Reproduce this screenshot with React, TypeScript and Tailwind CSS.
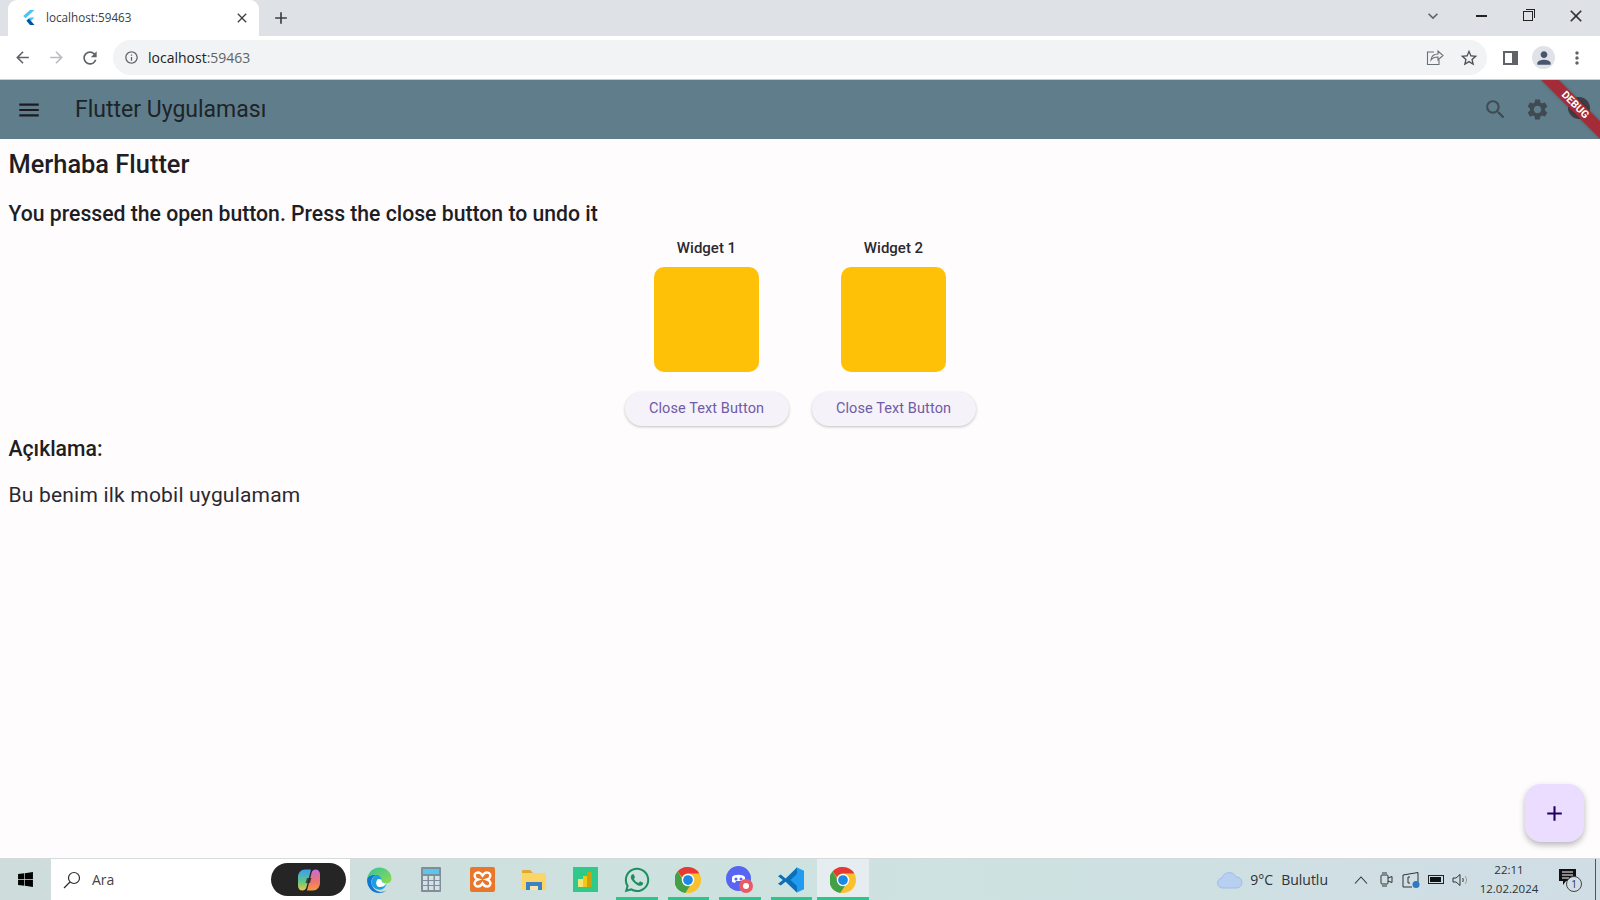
import React from "react";
import { MdMenu, MdSearch, MdSettings, MdAdd, MdArrowBack, MdArrowForward, MdRefresh, MdClose, MdInfoOutline, MdPerson, MdStarBorder, MdMoreVert, MdKeyboardArrowDown } from "react-icons/md";
import { FaWindows, FaWhatsapp } from "react-icons/fa";

const Flutter = () => (
  <svg width="13" height="16" viewBox="0 0 13 16">
    <path d="M8 0h4.500L3.500 8.200 1.200 6z" fill="#47c5fb" />
    <path d="M8 7.400h4.500L6.800 13l-2.300-2.200z" fill="#47c5fb" />
    <path d="M4.500 10.800l2.300-2.200L12.500 15H8z" fill="#00569e" />
  </svg>
);

const Chrome = () => (
  <svg width="26" height="26" viewBox="0 0 48 48">
    <circle cx="24" cy="24" r="24" fill="#fbc02d" />
    <path d="M24 0a24 24 0 0 1 20.800 12H24a12 12 0 0 0-11 7L5 8A24 24 0 0 1 24 0z" fill="#e53935" />
    <path d="M5 8l10 17a10 10 0 0 0 13 9L19 48A24 24 0 0 1 5 8z" fill="#43a047" />
    <circle cx="24" cy="24" r="11.500" fill="#fff" />
    <circle cx="24" cy="24" r="9" fill="#1e88e5" />
  </svg>
);

const Edge = () => (
  <svg width="26" height="26" viewBox="0 0 48 48">
    <defs>
      <linearGradient id="edgeA" x1="0" y1="0" x2="1" y2="1">
        <stop offset="0" stopColor="#35c1a0" />
        <stop offset="1" stopColor="#8fdc4a" />
      </linearGradient>
    </defs>
    <path d="M2 22C4 9 14 1 25 1c13 0 22 10 22 20 0 7-6 10-12 9-5-1-6-3-6-5 0-5-4-9-10-9C10 16 4 18 2 22z" fill="url(#edgeA)" />
    <path d="M2 22c2-5 9-8 16-7-6 3-9 8-8 15 1 8 8 15 17 16 4 0 8-1 11-3-4 4-9 5-14 5C11 48 1 36 2 22z" fill="#0f78d4" />
    <path d="M18 15c6-1 11 4 11 10 0 4 4 6 9 5-2 9-8 12-13 12-9 0-15-8-15-13 0-6 3-11 8-14z" fill="#1c9ee0" />
    <path d="M21 23c4-2 8 0 8 3 0 3 5 5 9 4-3 5-7 7-12 7-6 0-10-7-5-14z" fill="#fff" />
  </svg>
);

const Calc = () => (
  <svg width="20" height="25" viewBox="0 0 20 25">
    <rect width="20" height="25" rx="1" fill="#7d8f9a" />
    <rect x="2" y="2" width="16" height="5" fill="#5cc6ea" />
    {[9, 14, 19].map((y) =>
      [2, 8, 14].map((x) => <rect key={`${x}-${y}`} x={x} y={y} width="4.500" height="4" fill="#d9e0e3" />)
    )}
  </svg>
);

const Xampp = () => (
  <svg width="25" height="25" viewBox="0 0 25 25">
    <rect width="25" height="25" rx="2" fill="#e8762b" />
    <path d="M8 5.500c2.500 0 3.500 1.500 4.500 3 1-1.500 2-3 4.500-3 3 0 4.500 3 2.500 5.500-.7.700-1.500 1.200-2.500 1.500 1 .3 1.800.8 2.500 1.500 2 2.500.5 5.500-2.500 5.500-2.500 0-3.500-1.500-4.500-3-1 1.500-2 3-4.500 3-3 0-4.500-3-2.500-5.500.7-.7 1.500-1.200 2.500-1.500-1-.3-1.800-.8-2.500-1.500C3.500 8.500 5 5.500 8 5.500z" fill="none" stroke="#fff" strokeWidth="2.400" />
  </svg>
);

const Folder = () => (
  <svg width="24" height="22" viewBox="0 0 24 22">
    <path d="M0 2a1 1 0 0 1 1-1h7l3 3H0z" fill="#e0a82e" />
    <rect y="4" width="24" height="17" rx="1" fill="#fbd566" />
    <path d="M4 13h16v8h-4v-4H8v4H4z" fill="#3b82c4" />
    <rect x="8" y="17" width="8" height="4" fill="#f5e5a8" />
  </svg>
);

const PowerBi = () => (
  <svg width="25" height="25" viewBox="0 0 25 25">
    <rect width="25" height="25" fill="#2fc98a" />
    <rect x="5" y="12" width="5" height="8" fill="#f6e27a" />
    <rect x="10" y="9" width="5" height="11" fill="#f2c811" />
    <rect x="14" y="5" width="5" height="15" fill="#c9a20c" />
  </svg>
);

const Discord = () => (
  <svg width="28" height="28" viewBox="0 0 28 28">
    <circle cx="12.500" cy="12.500" r="12.500" fill="#5865f2" />
    <path d="M6 11c2-3 11-3 13 0v5l-3 1-1-2h-5l-1 2-3-1z" fill="#fff" />
    <circle cx="10" cy="13" r="1.500" fill="#5865f2" />
    <circle cx="15" cy="13" r="1.500" fill="#5865f2" />
    <circle cx="20" cy="20" r="7" fill="#ea5a64" />
    <circle cx="20" cy="20" r="3" fill="#fff" />
  </svg>
);

const VsCode = () => (
  <svg width="26" height="26" viewBox="0 0 24 24">
    <path d="M17.500 0.500L24 3.500v17l-6.500 3L9 15l8.500-15z" fill="#1f9cf0" />
    <path d="M17.500 0.500L7 10.500 2.500 7 0 8.500l4.500 3.500L0 15.500 2.500 17 7 13.500l10.500 10V17.500L11.500 12l6-5.500z" fill="#0c6fb8" />
  </svg>
);

const Copilot = () => (
  <svg width="24" height="24" viewBox="0 0 24 24">
    <defs>
      <linearGradient id="copA" x1="0" y1="0" x2="0" y2="1">
        <stop offset="0" stopColor="#3b9cf5" />
        <stop offset="0.6" stopColor="#62c97f" />
        <stop offset="1" stopColor="#f5c542" />
      </linearGradient>
      <linearGradient id="copB" x1="0" y1="0" x2="0" y2="1">
        <stop offset="0" stopColor="#c86dd7" />
        <stop offset="0.6" stopColor="#f0746a" />
        <stop offset="1" stopColor="#f59a42" />
      </linearGradient>
    </defs>
    <path d="M8 1.500h6L9.500 19c-.5 2-2 3.500-4 3.500-3 0-4.500-2-4.500-5V9c0-4 3-7.500 7-7.500z" fill="url(#copA)" />
    <path d="M16 22.500h-6L14.500 5c.5-2 2-3.500 4-3.500 3 0 4.500 2 4.500 5V15c0 4-3 7.500-7 7.500z" fill="url(#copB)" />
    <path d="M10 10h4.500l-1.500 5h-4.500z" fill="#252525" opacity="0.75" />
  </svg>
);

const Cloud = () => (
  <svg width="26" height="18" viewBox="0 0 26 18">
    <path d="M6 17a5 5 0 0 1-1-10 7.500 7.500 0 0 1 14-1 5.500 5.500 0 0 1 1 11z" fill="#b7d0f2" stroke="#9fbde8" />
  </svg>
);

const Underline = ({ wide }: { wide?: boolean }) => (
  <span className={`absolute bottom-0 h-[3px] bg-[#2ec48b] ${wide ? "left-0 right-0" : "left-[5px] right-[5px]"}`} />
);

const TaskIcon = ({ children, on, active }: { children: React.ReactNode; on?: boolean; active?: boolean }) => (
  <div className={`relative flex h-full w-[51.5px] items-center justify-center ${active ? "bg-[#e6edf0]" : ""}`}>
    {children}
    {on && <Underline wide={active} />}
  </div>
);

const Widget = ({ label }: { label: string }) => (
  <div className="flex w-[164px] flex-col items-center">
    <div className="text-[15px] leading-[20px] font-medium text-[#2b292f]">{label}</div>
    <div className="mt-[9px] h-[105px] w-[105px] rounded-[10px] bg-[#ffc107]" />
    <button className="mt-[20px] h-[34px] w-[164px] rounded-full bg-[#f6f2f9] text-[14.5px] tracking-[0.1px] text-[#6f5ba8] shadow-[0_1px_3px_rgba(0,0,0,0.24)]">
      Close Text Button
    </button>
  </div>
);

export default function App() {
  return (
    <div className="flex h-screen w-full flex-col overflow-hidden bg-[#fffcfe] font-['Roboto',sans-serif]">
      {/* tab strip */}
      <div className="flex h-[36px] shrink-0 items-end bg-[#dee1e6]">
        <div className="ml-[8px] flex h-[36px] w-[251px] items-center rounded-t-[9px] bg-white pl-[14px] pr-[9px]">
          <Flutter />
          <span className="ml-[11px] flex-1 font-['Open_Sans',sans-serif] text-[11.7px] text-[#3c4043]">localhost:59463</span>
          <MdClose size={16} className="text-[#3c4043]" />
        </div>
        <div className="ml-[12px] flex h-[36px] w-[20px] items-center justify-center">
          <MdAdd size={22} className="text-[#3c4043]" />
        </div>
        <div className="ml-auto flex h-[36px] items-center pb-[4px] text-[#3c4043]">
          <MdKeyboardArrowDown size={20} className="mr-[33px] text-[#5f6368]" />
          <span className="mr-[36px] h-[1.5px] w-[11px] bg-[#222]" />
          <span className="relative mr-[33px] h-[10px] w-[10px] border border-[#222]">
            <span className="absolute -right-[3px] -top-[3px] h-[9px] w-[9px] border-r border-t border-[#222]" />
          </span>
          <MdClose size={20} className="mr-[14px] text-[#333]" />
        </div>
      </div>
      {/* toolbar */}
      <div className="flex h-[44px] shrink-0 items-center border-b border-[#c8ced2] bg-white">
        <MdArrowBack size={19} className="ml-[13px] text-[#5f6368]" />
        <MdArrowForward size={19} className="ml-[15px] text-[#b8bbbf]" />
        <MdRefresh size={20} className="ml-[14px] text-[#5f6368]" />
        <div className="ml-[13px] flex h-[35px] w-[1374px] items-center rounded-full bg-[#f1f3f4] pl-[11px] pr-[8px]">
          <MdInfoOutline size={15} className="text-[#5f6368]" />
          <span className="ml-[9px] flex-1 font-['Open_Sans',sans-serif] text-[14px] text-[#5f6368]">
            <span className="text-[#202124]">localhost</span>:59463
          </span>
          <svg width="18" height="17" viewBox="0 0 18 17" fill="none" stroke="#6b7073" strokeWidth="1.100">
            <path d="M8 3H1.500v12.500H13V11" />
            <path d="M5 11c.5-4 3-6 7-6V2l5 4.500L12 11V8c-3 0-5.500 1-7 3z" />
          </svg>
          <MdStarBorder size={20} className="ml-[15px] text-[#4f5356]" />
        </div>
        <div className="ml-[16px] flex h-[14px] w-[15px] justify-end border-2 border-[#5f6368]">
          <span className="h-full w-[4px] bg-[#5f6368]" />
        </div>
        <div className="ml-[14px] flex h-[23px] w-[23px] items-center justify-center rounded-full bg-[#dfe3e8]">
          <MdPerson size={20} className="text-[#47566e]" />
        </div>
        <MdMoreVert size={20} className="ml-[12px] text-[#5f6368]" />
      </div>
      {/* app bar */}
      <div className="relative flex h-[59px] shrink-0 items-center overflow-hidden bg-[#607d8b]">
        <MdMenu size={26} className="ml-[16px] text-[#1d1b20]" />
        <span className="ml-[33px] pt-[2px] text-[23px] text-[#1d2428]">Flutter Uygulaması</span>
        <div className="ml-auto mr-[50px] flex items-center gap-[17px] text-[#3f4a52]">
          <MdSearch size={25} />
          <MdSettings size={25} />
        </div>
        <span className="absolute left-[1568px] top-[17px] h-[22px] w-[22px] rounded-full bg-[#3f3f48]" />
        <div className="absolute left-[1533px] top-[19px] flex h-[12px] w-[84px] rotate-45 items-center justify-center bg-[#a32c38] text-[10.5px] leading-none font-bold text-white shadow-[0_0_3px_rgba(0,0,0,0.3)]">
          DEBUG
        </div>
      </div>
      {/* body */}
      <main className="relative flex-1 px-[8.5px] pt-[10px] text-[#201e24]">
        <h1 className="text-[25.4px] leading-[30px] font-medium">Merhaba Flutter</h1>
        <p className="mt-[20.5px] text-[21.2px] leading-[28px] font-medium">You pressed the open button. Press the close button to undo it</p>
        <div className="mt-[10px] flex justify-center gap-[23px]">
          <Widget label="Widget 1" />
          <Widget label="Widget 2" />
        </div>
        <h2 className="mt-[10px] text-[21.2px] leading-[26px] font-medium">Açıklama:</h2>
        <p className="mt-[20px] text-[21px] leading-[26px] tracking-[0.2px] text-[#2b292f]">Bu benim ilk mobil uygulamam</p>
        <button className="absolute bottom-[16px] right-[16px] flex h-[58px] w-[59px] items-center justify-center rounded-[16px] bg-[#eaddff] shadow-[0_3px_6px_rgba(0,0,0,0.28)]">
          <MdAdd size={25} className="text-[#21005d]" />
        </button>
      </main>
      {/* taskbar */}
      <div className="flex h-[42px] shrink-0 items-center border-t border-[#d5dadc] bg-gradient-to-r from-[#cfdcdc] via-[#cde3e0] to-[#d0dde5] text-[#1f2a30]">
        <div className="flex h-full w-[51px] items-center justify-center">
          <FaWindows size={17} className="text-black" />
        </div>
        <div className="flex h-full w-[299px] items-center bg-white pl-[12px] pr-[4px]">
          <svg width="18" height="18" viewBox="0 0 18 18" fill="none" stroke="#2b2b2b" strokeWidth="1.200">
            <circle cx="11" cy="7" r="5.500" />
            <path d="M7 11l-6 6" />
          </svg>
          <span className="ml-[11px] flex-1 font-['Open_Sans',sans-serif] text-[14px] text-[#444]">Ara</span>
          <div className="flex h-[33px] w-[75px] items-center justify-center rounded-full bg-[#252525]">
            <Copilot />
          </div>
        </div>
        <div className="ml-[3.5px] flex h-full items-center">
          <TaskIcon><Edge /></TaskIcon>
          <TaskIcon><Calc /></TaskIcon>
          <TaskIcon><Xampp /></TaskIcon>
          <TaskIcon><Folder /></TaskIcon>
          <TaskIcon><PowerBi /></TaskIcon>
          <TaskIcon on><FaWhatsapp size={28} className="text-[#1f8f5f]" /></TaskIcon>
          <TaskIcon on><Chrome /></TaskIcon>
          <TaskIcon on><Discord /></TaskIcon>
          <TaskIcon on><VsCode /></TaskIcon>
          <TaskIcon on active><Chrome /></TaskIcon>
        </div>
        <div className="ml-auto flex h-full items-center font-['Open_Sans',sans-serif] text-[#2b3238]">
          <Cloud />
          <span className="ml-[7px] text-[14px]">9°C</span>
          <span className="ml-[8px] text-[14px]">Bulutlu</span>
          <svg className="ml-[26px]" width="14" height="8" viewBox="0 0 14 8" fill="none" stroke="#333" strokeWidth="1.100"><path d="M1 7.500l6-6.500 6 6.500" /></svg>
          <svg className="ml-[12px]" width="13" height="15" viewBox="0 0 13 15" fill="none" stroke="#333"><rect x="1" y="3" width="7" height="9" rx="1" /><path d="M8 6l4-1.500v6L8 9M2 1h5M2 14h5" /></svg>
          <svg className="ml-[9px]" width="18" height="16" viewBox="0 0 18 16" fill="none" stroke="#333"><path d="M1 3l15-2.500V10M1 3v12h9" /><path d="M8 5H6v6h2" /><circle cx="14" cy="12.500" r="3.500" fill="#2f78c4" stroke="none" /></svg>
          <div className="ml-[8px] flex h-[9px] w-[16px] items-center border border-[#222] p-[1px]"><span className="h-full w-[11px] bg-[#111]" /></div>
          <svg className="ml-[8px]" width="17" height="14" viewBox="0 0 17 14" fill="none" stroke="#333"><path d="M1 5h3l4-3.500v11L4 9H1zM10.500 5c1 1 1 3 0 4" /><path d="M13 3c2 2 2 6 0 8" stroke="#999" /></svg>
          <div className="ml-[9px] -mt-[2px] flex w-[62px] flex-col items-center text-[11.5px] leading-[19px]">
            <span>22:11</span>
            <span>12.02.2024</span>
          </div>
          <div className="relative ml-[19px] mr-[15px] h-[21px] w-[21px]">
            <svg width="17" height="17" viewBox="0 0 17 17"><path d="M0 0h17v12H7l-3 4v-4H0z" fill="#111" /><path d="M3 3h11M3 6h11M3 9h7" stroke="#fff" /></svg>
            <span className="absolute -bottom-[2px] -right-[2px] flex h-[16px] w-[16px] items-center justify-center rounded-full border border-[#444] bg-[#d2dee5] text-[10px] leading-none">1</span>
          </div>
          <span className="mr-[4px] h-full w-px bg-[#555]" />
        </div>
      </div>
    </div>
  );
}
